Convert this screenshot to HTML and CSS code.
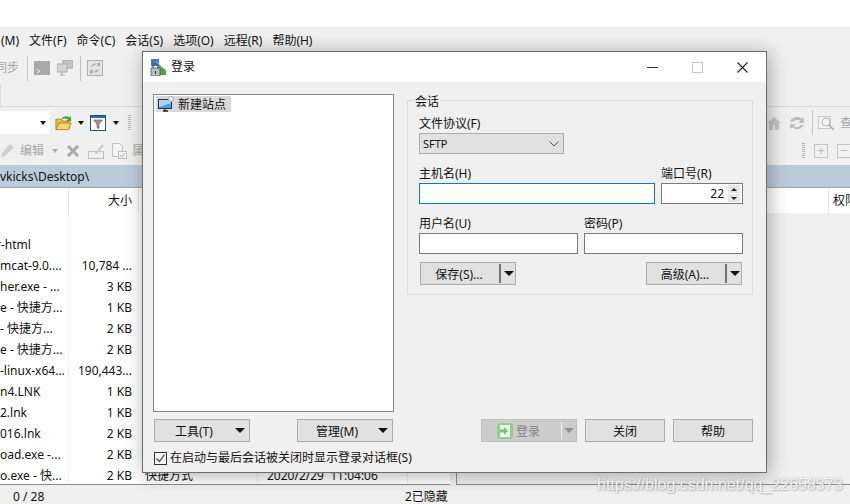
FILE: index.html
```html
<!DOCTYPE html>
<html lang="zh">
<head>
<meta charset="utf-8">
<title>登录</title>
<link rel="stylesheet" href="styles.css">
</head>
<body>
<div class="app">
  <div class="topgap"></div>
  <nav class="menubar">
    <span class="menu-first">(M)</span><span>文件(F)</span><span>命令(C)</span><span>会话(S)</span><span>选项(O)</span><span>远程(R)</span><span>帮助(H)</span>
  </nav>
  <div class="tb tb-main">
    <span class="dim">同步</span>
    <i class="sep"></i>
    <svg class="ic16 ic-term" viewBox="0 0 16 14"><rect width="16" height="14" fill="#a9a9a9"/><path d="M3 8l3 2-3 2" fill="none" stroke="#e8e8e8"/></svg>
    <svg class="ic16" viewBox="0 0 16 16"><rect x="6" y="0" width="10" height="8" fill="#c4c4c4" stroke="#a9a9a9"/><rect x="0" y="4" width="10" height="8" fill="#d4d4d4" stroke="#a9a9a9"/><path d="M3 15h5M5 12v3" stroke="#a9a9a9"/></svg>
    <i class="sep"></i>
    <svg class="ic16" viewBox="0 0 16 16"><rect x=".5" y=".5" width="15" height="15" fill="#e4e4e4" stroke="#b0b0b0"/><path d="M4 7a4 4 0 0 1 7-2l-2 1h4V2M12 9a4 4 0 0 1-7 2l2-1H3v4" fill="#a8a8a8"/></svg>
  </div>
  <div class="tabrow"><i class="tabedge"></i></div>
  <div class="tb tb-addr">
    <div class="addr-left">
      <div class="combo"><i class="combo-arrow"></i></div>
      <svg class="ic-open" viewBox="0 0 18 16"><path d="M1 4h6l1 2h7v8H1z" fill="#e8c048" stroke="#a88820"/><path d="M1 15l3-7h13l-3 7z" fill="#f4d870" stroke="#a88820"/><path d="M7 4c1-3 5-4 8-2l2-1v5h-5l2-2c-2-1-5-1-7 0z" fill="#3f9e3a"/></svg>
      <i class="arrow arrow-open"></i>
      <svg class="ic-filter" viewBox="0 0 16 16"><rect x=".5" y=".5" width="15" height="15" fill="#fff" stroke="#1d4f91"/><rect x="1" y="1" width="14" height="2" fill="#2a6ab0"/><path d="M3.5 5h9L9 9v4.500L7 12.500V9z" fill="#9a9a9a" stroke="#555" stroke-width=".6"/></svg>
      <i class="arrow arrow-filter"></i>
      <i class="grip"></i>
    </div>
    <div class="addr-right">
      <svg class="ic-home" viewBox="0 0 14 14"><path d="M7 1L0 7h2v7h10V7h2z" fill="#c6c6c6"/><rect x="6" y="9" width="2" height="5" fill="#f0f0f0"/></svg>
      <svg class="ic-ref" viewBox="0 0 14 14"><path d="M1 6a6 5 0 0 1 10-3l2-1v5H8l2-2a4 3 0 0 0-6 1zM13 8a6 5 0 0 1-10 3l-2 1V8h5l-2 2a4 3 0 0 0 6-1z" fill="#bdbdbd"/></svg>
      <i class="sep"></i>
      <svg class="ic-find" viewBox="0 0 17 16"><rect x=".5" y="1.500" width="12" height="12" fill="#f4f4f4" stroke="#c8c8c8"/><circle cx="8" cy="7" r="4" fill="none" stroke="#b5b5b5"/><path d="M11 10l5 5" stroke="#a9a9a9" stroke-width="1.500"/></svg>
      <span class="dim dim-find">查</span>
    </div>
  </div>
  <div class="tb tb-edit">
    <div class="edit-left">
      <svg class="ic-pen" viewBox="0 0 14 14"><path d="M1 13l1-4 7-8 4 3-8 8z" fill="#d0d0d0"/></svg>
      <span class="dim">编辑</span>
      <i class="arrow arrow-dim"></i>
      <svg class="ic-x" viewBox="0 0 14 14"><path d="M2 2l10 10M12 2L2 12" stroke="#a9a9a9" stroke-width="3"/></svg>
      <svg class="ic16" viewBox="0 0 16 16"><rect x=".5" y="8.500" width="15" height="7" fill="none" stroke="#c0c0c0"/><path d="M6 11l2-2 6-8 2 2-7 8z" fill="#cfcfcf"/></svg>
      <svg class="ic16" viewBox="0 0 16 16"><path d="M1.500.5h7l3 3v10h-10z" fill="#f4f4f4" stroke="#c0c0c0"/><rect x="7.500" y="8.500" width="8" height="7" fill="#f4f4f4" stroke="#c0c0c0"/><path d="M9 12l2 2 3-4" fill="none" stroke="#b0b0b0"/></svg>
      <span class="dim">属</span>
    </div>
    <div class="edit-right">
      <i class="grip"></i>
      <span class="sq">+</span>
      <span class="sq">−</span>
    </div>
  </div>
  <div class="pathbar">vkicks\Desktop\</div>
  <div class="panels">
    <section class="files">
      <div class="row head"><span class="c-name"></span><span class="c-size">大小</span><span class="c-type"></span><span class="c-date"></span></div>
      <div class="row"><span class="c-name"></span><span class="c-size"></span></div>
      <div class="row"><span class="c-name"><span class="clip">r-html</span></span><span class="c-size"></span></div>
      <div class="row"><span class="c-name">mcat-9.0....</span><span class="c-size">10,784 ...</span></div>
      <div class="row"><span class="c-name">her.exe - ...</span><span class="c-size">3 KB</span></div>
      <div class="row"><span class="c-name">e - 快捷方...</span><span class="c-size">1 KB</span></div>
      <div class="row"><span class="c-name">- 快捷方...</span><span class="c-size">2 KB</span></div>
      <div class="row"><span class="c-name">e - 快捷方...</span><span class="c-size">2 KB</span></div>
      <div class="row"><span class="c-name">-linux-x64...</span><span class="c-size">190,443...</span></div>
      <div class="row"><span class="c-name">n4.LNK</span><span class="c-size">1 KB</span></div>
      <div class="row"><span class="c-name">2.lnk</span><span class="c-size">1 KB</span></div>
      <div class="row"><span class="c-name">016.lnk</span><span class="c-size">2 KB</span></div>
      <div class="row"><span class="c-name">oad.exe -...</span><span class="c-size">2 KB</span></div>
      <div class="row"><span class="c-name">o.exe - 快...</span><span class="c-size">2 KB</span><span class="c-type">快捷方式</span><span class="c-date">2020/2/29&nbsp;&nbsp;11:04:06</span></div>
    </section>
    <section class="remote">
      <div class="remote-head"><span class="perm">权限</span></div>
    </section>
  </div>
  <footer class="status"><span class="st-count">0 / 28</span><span class="st-hidden">2已隐藏</span></footer>
</div>

<div class="dialog">
  <header class="titlebar">
    <svg class="title-ic" viewBox="0 0 17 17"><rect x="1" y="0" width="8" height="7" fill="#3b78d8"/><path d="M8 6l8 5v5H8z" fill="#4aa83c"/><path d="M6 3l7 6" stroke="#9fb0c0" stroke-width="1.500"/><path d="M3 9V7a2.500 2.500 0 0 1 5 0v2" fill="none" stroke="#555" stroke-width="1.200"/><rect x="1" y="9" width="9" height="8" fill="#b8bcc4" stroke="#555" stroke-width=".8"/><rect x="5" y="12" width="1" height="3" fill="#333"/></svg>
    <span class="title-text">登录</span>
    <div class="win-btns">
      <svg class="win" viewBox="0 0 11 11"><path d="M0 5.500h11" stroke="#333"/></svg>
      <svg class="win" viewBox="0 0 11 11"><rect x=".5" y=".5" width="10" height="10" fill="none" stroke="#c8c8c8"/></svg>
      <svg class="win" viewBox="0 0 11 11"><path d="M.5.500l10 10M10.500.500l-10 10" stroke="#222" stroke-width="1.100"/></svg>
    </div>
  </header>
  <div class="dlg-body">
    <div class="dlg-left">
      <div class="tree">
        <div class="tree-item">
          <svg class="site-ic" viewBox="0 0 16 16"><rect x=".5" y="3.500" width="13" height="9" fill="#4b9be8" stroke="#333"/><path d="M1 4h12v3L1 11z" fill="#a9d4f8"/><path d="M5 15h5M7 13v2" stroke="#222" stroke-width="1.300"/><circle cx="13" cy="3" r="2.500" fill="#fff" stroke="#8fa8c8"/></svg>
          <span class="tree-text">新建站点</span>
        </div>
      </div>
      <div class="left-btns">
        <button class="btn btn-tools" type="button"><span class="btn-label">工具(T)</span><i class="arrow arrow-lg"></i></button>
        <button class="btn btn-manage" type="button"><span class="btn-label">管理(M)</span><i class="arrow arrow-lg"></i></button>
      </div>
      <label class="check">
        <svg class="check-box" viewBox="0 0 13 13"><rect x=".5" y=".5" width="12" height="12" fill="#f4f4f4" stroke="#333"/><path d="M2.500 6.500l3 3 5-7" fill="none" stroke="#444" stroke-width="1.200"/></svg>
        <span>在启动与最后会话被关闭时显示登录对话框(S)</span>
      </label>
    </div>
    <div class="dlg-right">
      <fieldset class="group">
        <legend>会话</legend>
        <div class="field">
          <label>文件协议(F)</label>
          <div class="select"><span>SFTP</span><svg class="chev" viewBox="0 0 10 6"><path d="M.5.500L5 5 9.500.500" fill="none" stroke="#555"/></svg></div>
        </div>
        <div class="frow frow-host">
          <div class="field f-host"><label>主机名(H)</label><div class="input focus"></div></div>
          <div class="field f-port"><label>端口号(R)</label>
            <div class="input port"><span>22</span><div class="spin"><i class="spin-up"></i><i class="spin-down"></i></div></div>
          </div>
        </div>
        <div class="frow frow-user">
          <div class="field f-half"><label>用户名(U)</label><div class="input"></div></div>
          <div class="field f-half"><label>密码(P)</label><div class="input"></div></div>
        </div>
        <div class="group-btns">
          <button class="btn split" type="button"><span class="split-text btn-label">保存(S)...</span><i class="split-sep"></i><i class="arrow arrow-lg"></i></button>
          <button class="btn split" type="button"><span class="split-text btn-label">高级(A)...</span><i class="split-sep"></i><i class="arrow arrow-lg"></i></button>
        </div>
      </fieldset>
      <div class="action-btns">
        <button class="btn btn-login" type="button">
          <span class="login-main">
            <svg class="login-ic" viewBox="0 0 16 16"><rect x=".5" y=".5" width="15" height="15" rx="2" fill="#8fd08a" stroke="#8fd08a"/><rect x="3" y="2" width="10" height="12" fill="#f2f7f0"/><path d="M3 6.500h4V4l4 4-4 4V9.500H3z" fill="#78c074"/></svg>
            <span class="btn-label">登录</span>
          </span>
          <i class="login-sep"></i>
          <i class="arrow arrow-lg arrow-login"></i>
        </button>
        <button class="btn btn-act" type="button"><span class="btn-label">关闭</span></button>
        <button class="btn btn-act" type="button"><span class="btn-label">帮助</span></button>
      </div>
    </div>
  </div>
</div>
<div class="watermark">https://blog.csdn.net/qq_22658373</div>
</body>
</html>
```
FILE: styles.css
```css
* { box-sizing: border-box; }
html, body { margin: 0; padding: 0; height: 100%; overflow: hidden; }
body {
  position: relative;
  background: #f0f0f0;
  color: #111;
  font: 12px/16px "Noto Sans", "Noto Sans CJK SC", sans-serif;
}
i { display: block; font-style: normal; }
svg { display: block; flex: none; }
.app { display: flex; flex-direction: column; height: 504px; }
.topgap { height: 27px; background: #fff; flex: none; }
.menubar { height: 25px; display: flex; align-items: center; gap: 10px; flex: none; white-space: nowrap; padding: 2px 0 0 1px; }
.menubar span { display: block; }
.tb { display: flex; align-items: center; flex: none; }
.dim { color: #a8a8a8; white-space: nowrap; }
.sep { width: 1px; height: 25px; background: #c4c4c4; flex: none; }
.ic16 { width: 16px; height: 16px; }
.tb-main { height: 30px; padding-top: 2px; gap: 7px; margin-left: -5px; }
.tb-main .dim { width: 24px; margin-right: 1px; }
.tb-main .sep + .ic16 { margin-left: -1px; }
.tabrow { height: 25px; border-bottom: 1px solid #d8d8d8; flex: none; }
.tabedge { width: 1px; height: 23px; margin-top: 2px; background: #dcdcdc; }
.tb-addr { height: 29px; justify-content: space-between; padding-top: 2px; }
.addr-left { display: flex; align-items: center; }
.combo { width: 50px; height: 23px; background: #fff; border-right: 1px solid #f8f8f8; display: flex; justify-content: flex-end; align-items: center; padding-right: 3px; }
.combo-arrow { width: 0; height: 0; border-left: 3px solid transparent; border-right: 3px solid transparent; border-top: 4px solid #111; }
.ic-open { width: 17px; height: 16px; margin-left: 5px; }
.arrow { width: 0; height: 0; flex: none; border-left: 3px solid transparent; border-right: 3px solid transparent; border-top: 4px solid #111; }
.arrow-open { margin: 0 6px; }
.ic-filter { width: 16px; height: 16px; }
.arrow-filter { margin: 0 9px 0 7px; }
.grip { width: 3px; height: 16px; background: repeating-linear-gradient(#b4b4b4 0 1px, transparent 1px 2px); }
.addr-right { display: flex; align-items: center; width: 83px; overflow: hidden; flex: none; }
.ic-home { width: 14px; height: 16px; margin-right: 8px; }
.ic-ref { width: 16px; height: 16px; margin-right: 7px; }
.ic-find { width: 17px; height: 16px; margin-left: 5px; }
.dim-find { margin-left: 5px; }
.tb-edit { height: 29px; justify-content: space-between; }
.edit-left { display: flex; align-items: center; }
.ic-pen { width: 15px; height: 15px; margin-right: 5px; }
.arrow-dim { border-top-color: #aaa; margin: 0 8px; }
.ic-x { width: 14px; height: 14px; margin-right: 8px; }
.edit-left .ic16 { margin-right: 7px; }
.edit-left .ic16 + .ic16 { margin-right: 5px; }
.edit-right { display: flex; align-items: center; gap: 9px; margin-right: -1px; }
.sq { width: 14px; height: 14px; border: 1px solid #c4c4c4; color: #bbb; font: 13px/11px "Liberation Sans", sans-serif; text-align: center; }
.pathbar { height: 23px; background: #bccbdb; line-height: 23px; flex: none; border-bottom: 1px solid #9aa5b0; }
.panels { flex: 1; display: flex; gap: 6px; min-height: 0; }
.files { width: 450px; background: #fff; border-bottom: 1px solid #8a8f96; display: flex; flex-direction: column; flex: none; overflow: hidden; }
.row { height: 21px; display: flex; flex: none; line-height: 21px; white-space: nowrap; }
.row.head { height: 25px; line-height: 25px; }
.row.head .c-name, .row.head .c-size { border-right: 1px solid #e6e6e6; }
.c-name { width: 69px; overflow: hidden; border-right: 1px solid #eaf1fb; flex: none; }
.clip { display: block; margin-left: -4px; }
.c-size { width: 70px; text-align: right; padding-right: 7px; flex: none; }
.row.head .c-size { padding-right: 6px; }
.c-type { width: 119px; padding-left: 6px; flex: none; border-right: 1px solid #eee; }
.c-date { width: 150px; padding-left: 9px; flex: none; border-right: 1px solid #eee; }
.remote { flex: 1; border-bottom: 1px solid #8a8f96; border-left: 1px solid #8a8f96; }
.remote-head { height: 25px; background: #fff; display: flex; justify-content: flex-end; line-height: 25px; }
.perm { width: 22px; border-left: 1px solid #e6e6e6; padding-left: 4px; white-space: nowrap; }
.status { height: 19px; flex: none; display: flex; line-height: 23px; }
.st-count { padding-left: 13px; width: 405px; }

.dialog {
  position: absolute; left: 142px; top: 51px; width: 625px; height: 422px;
  background: #f0f0f0; border: 1px solid #6e6e6e;
  box-shadow: 2px 2px 18px rgba(0,0,0,.33);
  display: flex; flex-direction: column;
}
.titlebar { height: 30px; background: #fff; display: flex; align-items: center; padding-left: 7px; flex: none; }
.title-ic { width: 17px; height: 17px; }
.title-text { margin-left: 4px; }
.win-btns { margin-left: auto; display: flex; gap: 34px; padding-right: 18px; }
.win { width: 11px; height: 11px; }
.dlg-body { flex: 1; display: flex; gap: 13px; padding: 10px 13px 0 10px; min-height: 0; }
.dlg-left { width: 241px; display: flex; flex-direction: column; flex: none; padding-top: 2px; }
.tree { height: 318px; background: #fff; border: 1px solid #828790; padding: 1px 2px; }
.tree-item { display: flex; align-items: center; gap: 4px; width: 75px; height: 16px; background: #d9d9d9; padding-left: 2px; white-space: nowrap; }
.tree-text { padding-top: 2px; }
.site-ic { width: 16px; height: 16px; }
.left-btns { display: flex; justify-content: space-between; margin-top: 7px; padding: 0 1px; }
.btn { font: inherit; color: #111; background: #e1e1e1; border: 1px solid #adadad; height: 23px; padding: 0; display: flex; align-items: center; flex: none; }
.btn-label { padding-top: 2px; }
.btn-tools, .btn-manage { width: 96px; padding-right: 4px; justify-content: space-between; }
.btn-tools { padding-left: 20px; }
.btn-manage { padding-left: 18px; }
.arrow-lg { border-left-width: 5px; border-right-width: 5px; border-top-width: 5px; }
.check { display: flex; align-items: center; gap: 3px; margin-top: 8px; padding-left: 1px; white-space: nowrap; height: 16px; }
.check-box { width: 13px; height: 13px; }

.dlg-right { flex: 1; display: flex; flex-direction: column; min-width: 0; }
.group { margin: 0; border: 1px solid #dcdcdc; padding: 6px 9px 9px 11px; height: 203px; min-width: 0; display: block; }
.group legend { padding: 0 1px; margin-left: -5px; line-height: 19px; height: 17px; }
.field { display: flex; flex-direction: column; gap: 2px; }
.field label { white-space: nowrap; line-height: 18px; height: 16px; }
.select { width: 145px; height: 21px; background: #e1e1e1; border: 1px solid #adadad; display: flex; align-items: center; justify-content: space-between; padding: 0 4px 0 3px; font-size: 11px; }
.chev { width: 10px; height: 6px; }
.frow { display: flex; gap: 6px; }
.frow-host { margin-top: 11px; }
.frow-user { margin-top: 11px; }
.f-host { width: 236px; }
.f-port { width: 82px; }
.f-half { width: 159px; }
.input { height: 21px; background: #fff; border: 1px solid #7a7a7a; }
.input.focus { border-color: #0078d7; }
.port { display: flex; align-items: center; justify-content: flex-end; gap: 4px; padding-right: 2px; }
.spin { width: 12px; display: flex; flex-direction: column; gap: 1px; }
.spin-up, .spin-down { height: 8px; background: #e6e6e6; display: flex; align-items: center; justify-content: center; }
.spin-up::after { content: ""; border-left: 3px solid transparent; border-right: 3px solid transparent; border-bottom: 3px solid #222; }
.spin-down::after { content: ""; border-left: 3px solid transparent; border-right: 3px solid transparent; border-top: 3px solid #222; }
.group-btns { display: flex; justify-content: space-between; margin-top: 8px; padding: 0 1px; }
.split { width: 96px; height: 23px; }
.split-text { width: 76px; text-align: center; white-space: nowrap; }
.split-sep { width: 2px; height: 19px; background: #707070; margin-left: 2px; margin-right: 3px; }
.action-btns { display: flex; justify-content: flex-end; gap: 8px; margin-top: 124px; }
.btn-act { width: 80px; justify-content: center; }
.btn-login { width: 96px; background: #ccc; border-color: #bfbfbf; color: #858585; }
.login-main { display: flex; align-items: center; gap: 3px; padding-left: 15px; width: 79px; }
.login-ic { width: 16px; height: 16px; }
.login-sep { width: 1px; height: 17px; background: #f2f2f2; flex: none; }
.arrow-login { border-top-color: #8f8f8f; margin-left: 2px; }
.watermark {
  position: absolute; left: 597px; top: 476px;
  font: 16px/18px "Liberation Sans", sans-serif;
  color: rgba(255,255,255,.88);
  text-shadow: 0 0 2px rgba(110,110,110,.6), 1px 1px 1px rgba(150,150,150,.4);
  white-space: nowrap;
}
```
